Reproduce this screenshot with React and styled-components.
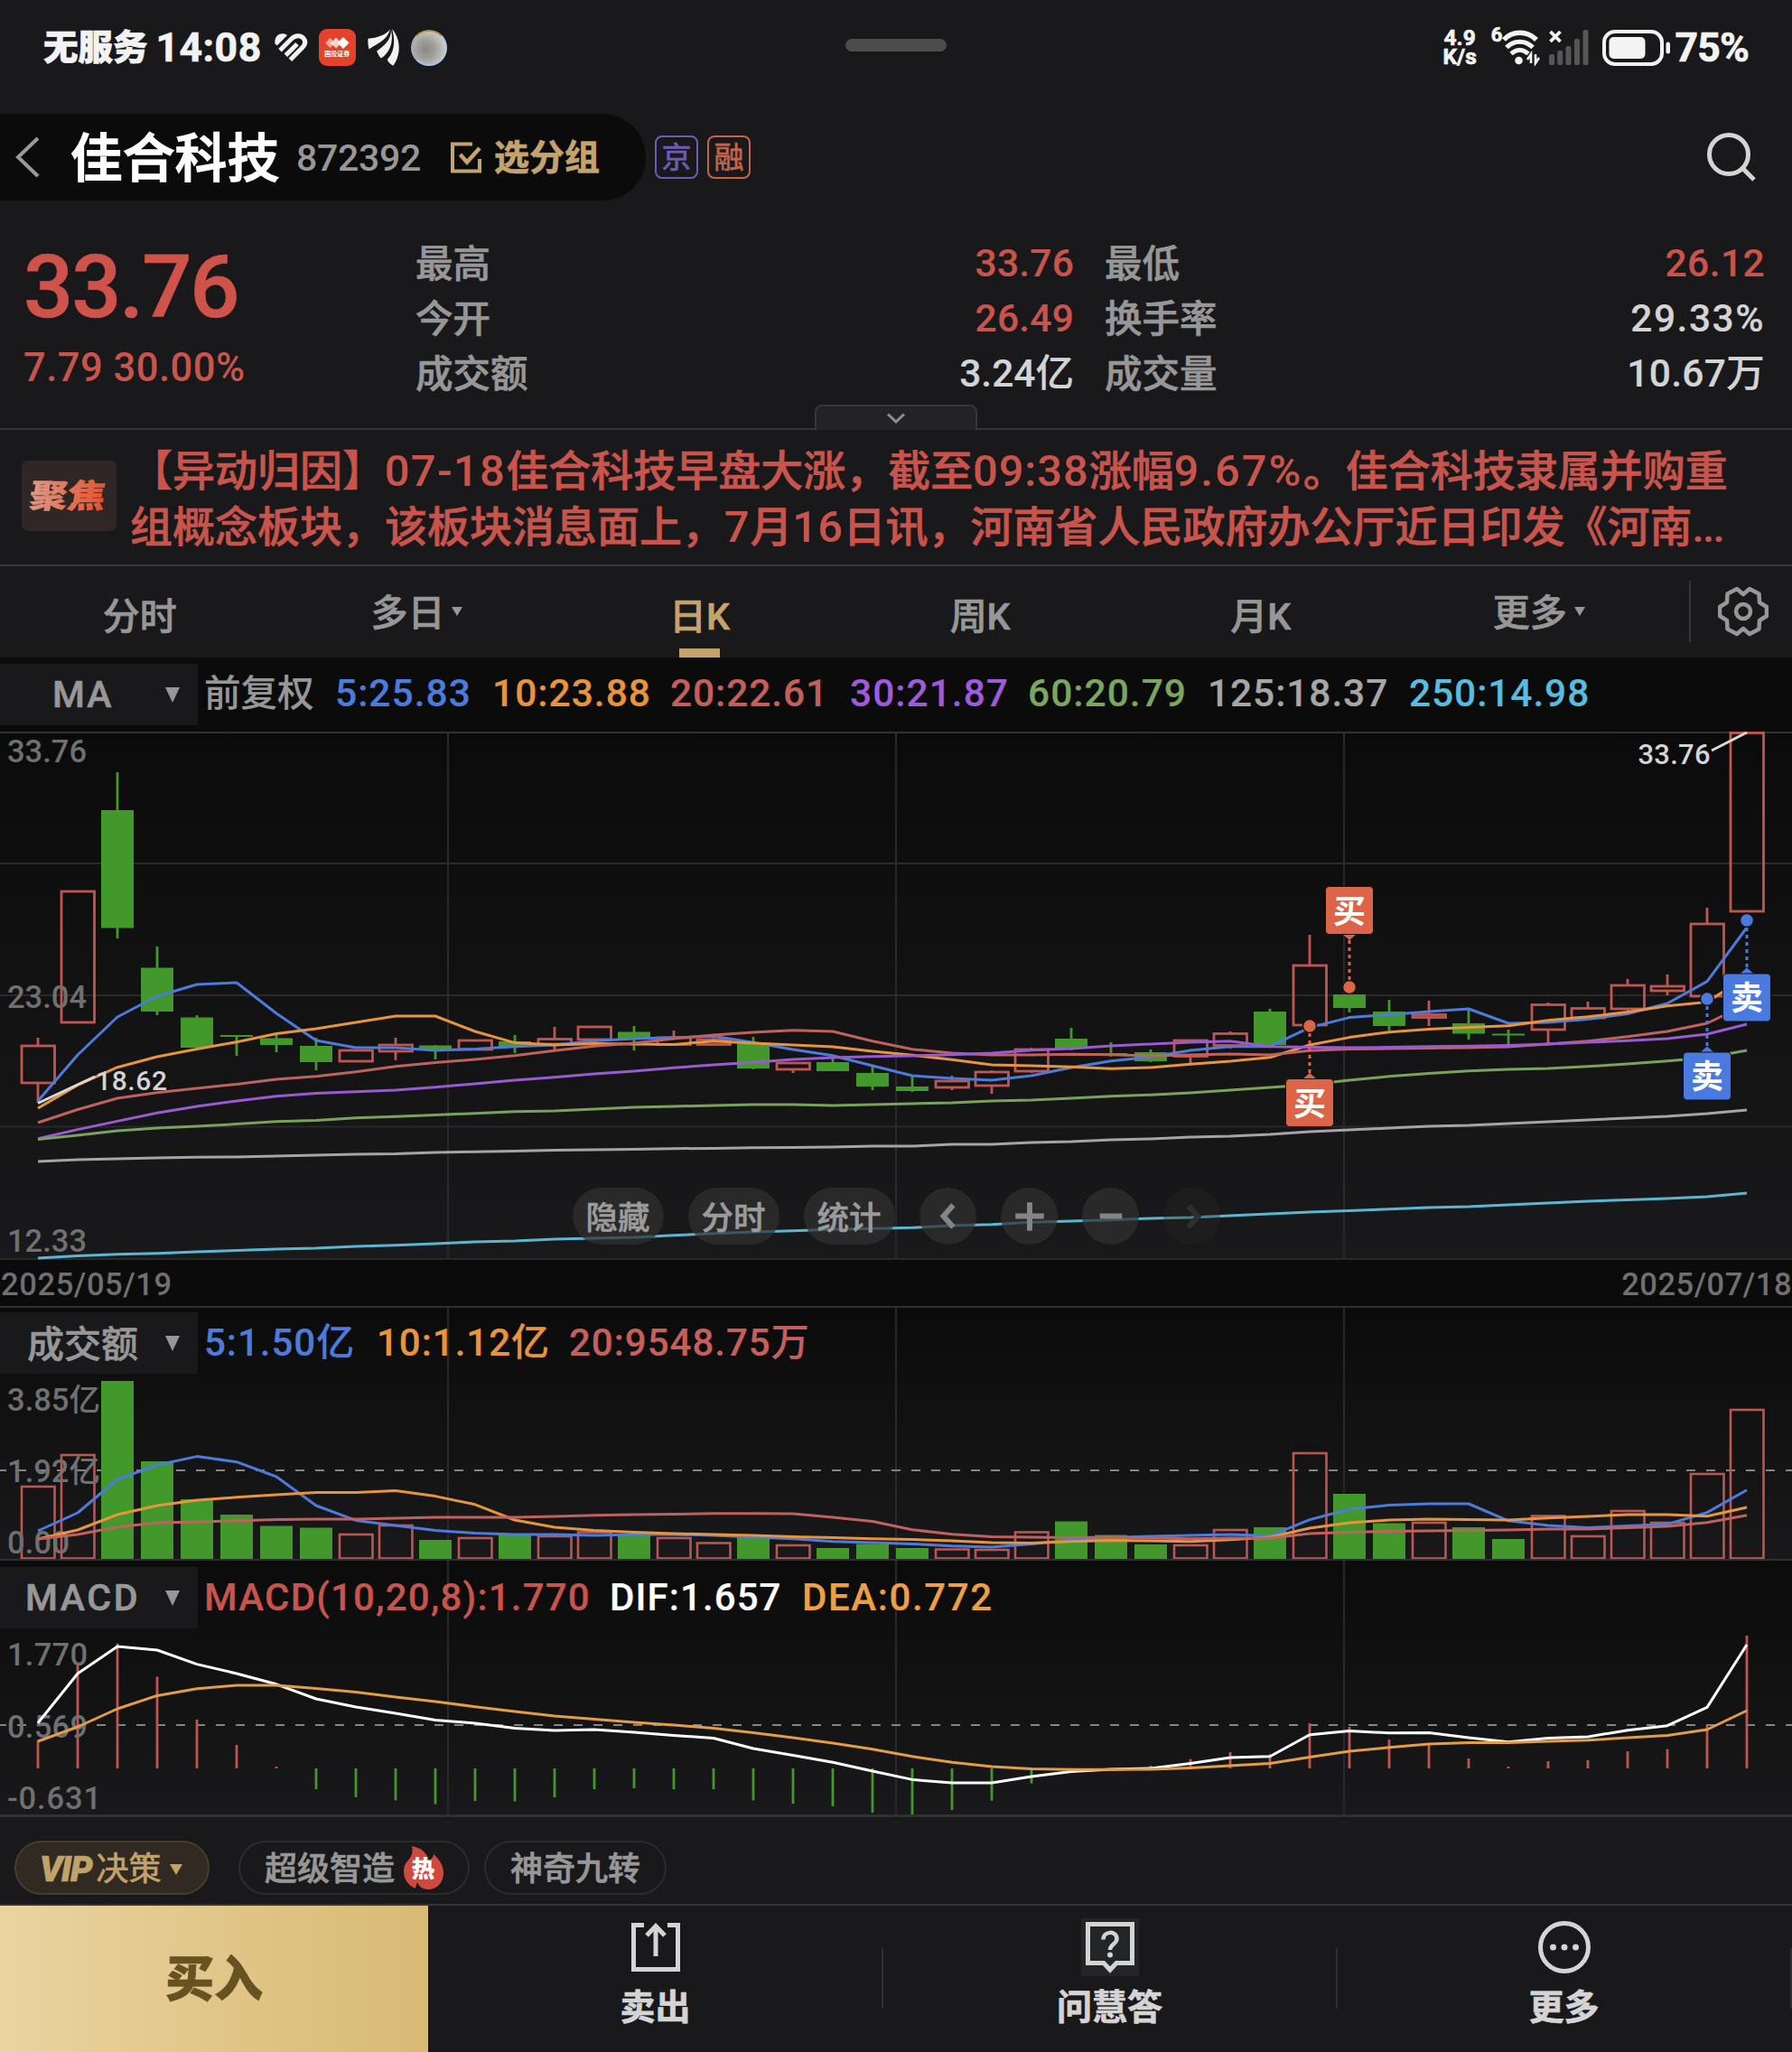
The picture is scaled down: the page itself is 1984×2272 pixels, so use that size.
import React from "react";
import styled, { createGlobalStyle } from "styled-components";

const RED = "#c8544c";
const GOLD = "#c4a46c";
const GRAY = "#979797";
const LIGHT = "#d4d4d4";
const DIM = "#707071";
const GREEN = "#43982b";
const BLUE = "#4d7bdb";
const ORANGE = "#e7943e";
const FONT = '"Roboto", "Noto Sans CJK SC", sans-serif';

const Global = createGlobalStyle`
  * { box-sizing: border-box; }
  body {
    margin: 0;
    background: #19191b;
    font-family: ${FONT};
    -webkit-text-stroke: 0.7px;
  }
  svg { display: block; }
`;

const Screen = styled.div`
  width: 1984px;
  height: 2272px;
  background: #19191b;
  display: flex;
  flex-direction: column;
  overflow: hidden;
  white-space: nowrap;
`;

const Text = styled.span`
  font-size: ${(p) => p.$size}px;
  font-weight: ${(p) => p.$weight || 500};
  color: ${(p) => p.$color || GRAY};
  letter-spacing: ${(p) => p.$ls || 0}px;
  line-height: 1;
`;

/* ---------- status bar ---------- */
const StatusBar = styled.header`
  height: 126px;
  padding: 0 48px 21px;
  display: grid;
  grid-template-columns: 1fr 112px 1fr;
  align-items: center;
`;
const StatusSide = styled.div`
  display: flex;
  align-items: center;
  justify-content: ${(p) => (p.$end ? "flex-end" : "flex-start")};
`;
const Handle = styled.div`
  height: 14px;
  margin-top: -5px;
  border-radius: 7px;
  background: #4c4c4c;
`;
const StatusText = styled(Text)`
  color: #f3f3f3;
  font-weight: ${(p) => p.$weight || 700};
  margin-left: ${(p) => p.$ml || 0}px;
  padding-top: 2px;
`;
const StatusIcon = styled.svg`
  margin-left: ${(p) => p.$ml}px;
  flex: none;
`;
const Speed = styled.div`
  display: flex;
  flex-direction: column;
  align-items: center;
  font-size: 24.5px;
  font-weight: 700;
  line-height: 20px;
  gap: 1px;
  color: #f3f3f3;
`;
const WifiBand = styled.span`
  align-self: flex-start;
  margin-left: 16px;
  margin-top: -3px;
  color: #f3f3f3;
  font-size: 22px;
  font-weight: 700;
  line-height: 26px;
`;
const BrokerLogo = styled.div`
  width: 41px;
  height: 41px;
  margin-left: 12px;
  border-radius: 9px;
  background: #e2432a;
  display: flex;
  flex-direction: column;
  align-items: center;
  justify-content: center;
  gap: 2px;
  color: #fff;
  font-size: 7px;
  font-weight: 700;
  line-height: 8px;
  -webkit-text-stroke: 0;
`;
const Ball = styled.div`
  width: 40px;
  height: 40px;
  margin-left: 12px;
  border-radius: 50%;
  border: 2.5px solid;
  border-color: #b08f55 #b9cbe0 #a3c6f2 #a9adb0;
  background: radial-gradient(circle at 40% 55%, #8b8983 0%, #a09f99 35%, #c3c2bd 68%, #e6e8e8 100%);
`;

/* ---------- title ---------- */
const TitleBar = styled.div`
  height: 96px;
  display: flex;
  align-items: center;
`;
const TitlePill = styled.div`
  width: 715px;
  height: 96px;
  padding-left: 17px;
  border-radius: 0 48px 48px 0;
  background: #0b0b0b;
  display: flex;
  align-items: center;
`;
const StockName = styled(Text)`
  width: 250px;
  margin-left: 34px;
  padding-top: 6px;
  -webkit-text-stroke: 1.5px;
`;
const StockCode = styled(Text)`
  width: 171px;
  padding-top: 2px;
  -webkit-text-stroke: 0;
`;
const GroupLabel = styled(Text)`
  margin-left: 14px;
  padding-top: 3px;
`;
const MarketBadge = styled.span`
  width: 48px;
  height: 48px;
  margin-left: 10px;
  border: 2px solid ${(p) => p.$color};
  border-radius: 8px;
  color: ${(p) => p.$color};
  font-size: 33px;
  line-height: 46px;
  text-align: center;
`;
const SearchIcon = styled.svg`
  margin-left: auto;
  margin-right: 38px;
`;

/* ---------- quote ---------- */
const Quote = styled.section`
  position: relative;
  height: 254px;
  padding: 40px 30px 0 26px;
  border-bottom: 2px solid #353537;
  display: grid;
  grid-template-columns: 434px 729px 1fr;
`;
const PriceBlock = styled.div`
  display: flex;
  flex-direction: column;
`;
const Price = styled(Text)`
  line-height: 113px;
`;
const Change = styled(Text)`
  line-height: 65px;
  -webkit-text-stroke: 0;
`;
const StatColumn = styled.div`
  display: flex;
  flex-direction: column;
  margin-left: ${(p) => p.$ml || 0}px;
`;
const StatRow = styled.div`
  height: 61px;
  display: flex;
  align-items: center;
  justify-content: space-between;
`;
const StatValue = styled(Text)`
  -webkit-text-stroke: 0.2px;
`;
const Expand = styled.div`
  position: absolute;
  left: 902px;
  bottom: -2px;
  width: 180px;
  height: 28px;
  border: 2px solid #38383a;
  border-bottom: 0;
  border-radius: 8px 8px 0 0;
  background: #232325;
  display: flex;
  align-items: center;
  justify-content: center;
`;

/* ---------- news ---------- */
const News = styled.section`
  height: 151px;
  padding: 15px 0 0 24px;
  border-bottom: 2px solid #353537;
  display: flex;
`;
const FocusBadge = styled.div`
  width: 105px;
  height: 78px;
  margin: 19px 15px 0 0;
  padding: 2px 2px 0 0;
  border-radius: 7px;
  background: #2f2726;
  display: flex;
  align-items: center;
  justify-content: center;
`;
const FocusText = styled.span`
  font-size: 42px;
  font-weight: 900;
  line-height: 1.2;
  transform: skewX(-8deg) scaleY(0.86);
  color: transparent;
  background: linear-gradient(90deg, #dd9a86, #e4512f);
  background-clip: text;
  -webkit-background-clip: text;
`;
const NewsBody = styled.div`
  color: ${RED};
  font-size: 47px;
  font-weight: 500;
  line-height: 62px;
`;
const NewsLine = styled.div`
  height: 62px;
`;
const Num = styled.span`
  font-size: 48.5px;
  letter-spacing: ${(p) => p.$ls}px;
  -webkit-text-stroke: 0.2px;
`;

/* ---------- period tabs ---------- */
const Tabs = styled.nav`
  height: 101px;
  display: flex;
  align-items: center;
`;
const Tab = styled.div`
  position: relative;
  width: 310.6px;
  height: 101px;
  padding-right: ${(p) => (p.$menu ? 9 : p.$first ? 1 : 4)}px;
  padding-bottom: ${(p) => (p.$menu ? 5 : 0)}px;
  padding-top: ${(p) => (p.$menu ? 0 : 3)}px;
  display: flex;
  align-items: center;
  justify-content: center;
  gap: 8px;
  color: ${(p) => (p.$active ? GOLD : GRAY)};
  font-size: 41px;
  font-weight: 500;
`;
const TabLine = styled.div`
  position: absolute;
  left: 131px;
  bottom: 0;
  width: 45px;
  height: 10px;
  background: ${GOLD};
`;
const Triangle = styled.i`
  width: 0;
  height: 0;
  margin-left: ${(p) => p.$ml || 0}px;
  margin-top: ${(p) => p.$mt || 0}px;
  border-left: ${(p) => p.$w / 2}px solid transparent;
  border-right: ${(p) => p.$w / 2}px solid transparent;
  border-top: ${(p) => p.$h}px solid ${(p) => p.$color || GRAY};
`;
const SettingsCell = styled.div`
  height: 68px;
  margin-left: 6px;
  margin-top: -2px;
  padding-left: 30px;
  border-left: 2px solid #353537;
  display: flex;
  align-items: center;
`;

/* ---------- indicator headers ---------- */
const Legend = styled.div`
  position: relative;
  height: ${(p) => p.$h}px;
  padding-top: 7px;
  background: ${(p) => p.$bg || "transparent"};
  display: flex;
  -webkit-text-stroke: 0.2px;
`;
const IndicatorPicker = styled.div`
  width: 219px;
  height: 68px;
  padding-right: 20px;
  background: #19191b;
  display: flex;
  align-items: center;
  justify-content: flex-end;
`;
const PickerName = styled(Text)`
  flex: 1;
  padding-left: ${(p) => p.$pl}px;
  padding-top: ${(p) => p.$pt || 0}px;
  -webkit-text-stroke: 0.6px;
`;
const LegendItems = styled.div`
  height: 67px;
  display: grid;
  grid-template-columns: ${(p) => p.$cols};
  align-items: center;
  padding-left: 7px;
`;

/* ---------- panels ---------- */
const Panel = styled.section`
  position: relative;
  height: ${(p) => p.$h}px;
  background: linear-gradient(#0b0b0b, #19191b);
`;
const Plot = styled.svg`
  position: absolute;
  left: 0;
  top: 0;
`;
const DateBar = styled.div`
  height: 51px;
  padding: 3px 0 0 1px;
  background: #0b0b0b;
  display: flex;
  align-items: center;
  justify-content: space-between;
  -webkit-text-stroke: 0;
`;
const PlotButtons = styled.div`
  position: absolute;
  left: 634px;
  top: 505px;
  display: flex;
  gap: 27px;
`;
const PlotButton = styled.button`
  width: ${(p) => (p.$round ? 63 : 101)}px;
  height: 63px;
  padding: 0 1px 2px 0;
  border: 0;
  border-radius: 32px;
  background: ${(p) => (p.$off ? "rgba(40,40,41,0.35)" : "rgba(48,48,49,0.72)")};
  color: #9b9b9b;
  font-family: ${FONT};
  font-size: 35.5px;
  font-weight: 500;
  -webkit-text-stroke: 0.6px;
  display: flex;
  align-items: center;
  justify-content: center;
`;

/* ---------- strategy strip ---------- */
const Strip = styled.div`
  height: 99px;
  padding: 27px 0 0 16px;
  border-bottom: 2px solid #353537;
  display: flex;
`;
const Chip = styled.div`
  width: ${(p) => p.$w}px;
  height: 60px;
  margin-right: ${(p) => p.$mr || 0}px;
  padding-left: ${(p) => (p.$gold ? 26 : 27)}px;
  border: 2px solid ${(p) => (p.$gold ? "#463c2b" : "#2c2c2e")};
  border-radius: 30px;
  background: ${(p) => (p.$gold ? "#302a23" : "transparent")};
  color: ${(p) => (p.$gold ? "#c0a26b" : GRAY)};
  font-size: 36px;
  font-weight: ${(p) => (p.$gold ? 400 : 500)};
  line-height: 1;
  display: flex;
  align-items: center;
`;
const ChipLabel = styled.span`
  padding-top: 4px;
`;
const Vip = styled.span`
  margin-right: 5px;
  padding-top: 4px;
  font-size: 39px;
  font-style: italic;
  font-weight: 900;
  letter-spacing: -1.2px;
`;
const HotBadge = styled.div`
  position: relative;
  width: 44px;
  height: 48px;
  margin-left: 10px;
`;
const HotText = styled.span`
  position: absolute;
  left: 9px;
  top: 13px;
  color: #fff;
  font-size: 25px;
  font-weight: 700;
  line-height: 26px;
`;

/* ---------- bottom bar ---------- */
const BottomBar = styled.footer`
  height: 162px;
  display: flex;
`;
const BuyButton = styled.div`
  width: 474px;
  height: 162px;
  padding-bottom: 7px;
  background: linear-gradient(90deg, #e9d4a0, #dfc283 65%, #d9b974);
  color: #675222;
  font-size: 54px;
  font-weight: 900;
  display: flex;
  align-items: center;
  justify-content: center;
`;
const Action = styled.div`
  position: relative;
  width: 503px;
  padding-top: 14px;
  display: flex;
  flex-direction: column;
  align-items: center;
  gap: 14px;
  color: ${LIGHT};
  font-size: 39px;
  font-weight: 700;
  line-height: 42px;
`;
const Divider = styled.i`
  position: absolute;
  right: -1px;
  top: 47px;
  width: 2px;
  height: 67px;
  background: #2f2f31;
`;

/* ---------- data ---------- */
const X = (i) => 42 + 44 * i;

// [rising, high, top, bottom, low]
const candles = [
  [1, 1149, 1158, 1199, 1221], [1, 987, 987, 1132, 1133], [0, 855, 897, 1027.5, 1039], [0, 1048, 1071.5, 1120, 1124],
  [0, 1124, 1126.5, 1160, 1160], [0, 1146, 1146, 1148, 1169], [0, 1144, 1149.5, 1157, 1165], [0, 1149, 1158, 1176, 1185],
  [1, 1163, 1163, 1175, 1175], [1, 1149, 1157, 1164, 1174], [0, 1157, 1157.5, 1163, 1173], [1, 1152, 1152, 1162, 1162],
  [0, 1146, 1153, 1159, 1166], [1, 1137, 1150.5, 1156, 1163], [1, 1136, 1137, 1151, 1156], [0, 1136, 1142.5, 1150, 1163],
  [1, 1141, 1149, 1156.5, 1157], [1, 1147, 1151, 1156.5, 1157], [0, 1148, 1154.5, 1183, 1184], [1, 1177, 1177, 1184, 1188],
  [0, 1170, 1176, 1186, 1186], [0, 1180, 1188, 1203, 1207], [0, 1192, 1203, 1208, 1209], [1, 1191, 1197, 1204, 1207],
  [1, 1185, 1187, 1202, 1211], [1, 1160, 1162, 1186, 1188], [0, 1138, 1150, 1161, 1163], [0, 1154, 1166, 1168, 1170],
  [0, 1162, 1165, 1175, 1176], [1, 1151, 1152, 1169.5, 1177], [1, 1142, 1144.5, 1157.5, 1161], [0, 1117, 1120, 1157, 1157],
  [1, 1035, 1069, 1135, 1136], [0, 1093, 1101, 1116, 1121], [0, 1107, 1120, 1136, 1141], [1, 1108, 1123.5, 1126.5, 1136],
  [0, 1118, 1133, 1144.5, 1151], [0, 1140, 1144.5, 1146.5, 1156], [1, 1110, 1112.5, 1140, 1155], [1, 1109, 1116.5, 1127, 1127],
  [1, 1084, 1091, 1117, 1120], [1, 1079, 1092, 1097, 1102], [1, 1005, 1023, 1103, 1106], [1, 811, 811.5, 1009, 1009],
];

const averages = [
  ["#a5a5a5", [1286, 1284, 1283, 1282, 1281.3, 1281, 1280, 1279, 1278, 1277.5, 1276, 1275.3, 1274.4, 1273.5, 1273, 1272.6, 1271.7, 1271.5, 1270.8, 1270.6, 1270, 1269, 1269, 1267, 1267, 1265, 1264, 1262, 1261, 1259, 1258, 1256, 1253, 1251, 1249, 1247, 1246, 1244, 1242, 1240, 1238, 1236, 1233, 1229]],
  ["#5bb6d2", [1393, 1390.6, 1388.8, 1387.8, 1386, 1384.6, 1383, 1382, 1380, 1378.7, 1377, 1375, 1374, 1372, 1371, 1370, 1367.7, 1365.7, 1364, 1362.7, 1361.3, 1360.3, 1359.3, 1357, 1355.7, 1353.3, 1352, 1350.7, 1349, 1348, 1346, 1344, 1342, 1340.5, 1338.7, 1337, 1336, 1334, 1332, 1330, 1328.6, 1327, 1325, 1321]],
  [BLUE, [1219, 1168, 1126, 1103, 1090, 1088, 1122, 1152, 1160, 1160, 1163, 1161.5, 1158.7, 1157, 1152.5, 1150, 1148.7, 1147.3, 1154.3, 1162, 1168.7, 1180, 1191, 1194, 1196, 1191, 1182, 1174.7, 1170.3, 1163, 1158.7, 1158.7, 1137.6, 1126.6, 1123.4, 1120, 1117, 1133, 1132, 1128.4, 1122.5, 1111, 1086.6, 1027]],
  [ORANGE, [1227, 1201.4, 1181.7, 1170, 1161.5, 1153.7, 1144.5, 1139, 1132, 1125, 1125, 1142, 1154.6, 1157, 1155.5, 1156, 1156.5, 1152.7, 1155, 1157, 1159, 1164, 1168.3, 1173.3, 1179, 1180, 1181.3, 1183.3, 1182, 1178.3, 1175, 1170.7, 1157, 1148.6, 1142.7, 1139.4, 1137.6, 1135.8, 1129.8, 1125.7, 1120.6, 1113.7, 1109.6, 1081]],
  ["#bf625e", [1243, 1228.5, 1216, 1209.7, 1205, 1200.5, 1195, 1191.8, 1186.7, 1180.8, 1176.6, 1173, 1168.8, 1163.3, 1158.3, 1155, 1150, 1146, 1143, 1140.7, 1142, 1152.7, 1161.7, 1166, 1168, 1168, 1167.3, 1167.7, 1169, 1168, 1167, 1168, 1163.3, 1161.5, 1161, 1160.5, 1160, 1159, 1156, 1152.8, 1147.7, 1142, 1133, 1112]],
  ["#995ad2", [1260.7, 1250.6, 1241.4, 1232.2, 1225, 1219, 1213.8, 1210.6, 1208.8, 1207, 1203.7, 1200, 1196, 1192.7, 1189, 1186, 1182.3, 1179, 1176.3, 1173, 1171, 1169.7, 1169, 1167.7, 1166, 1162.7, 1161, 1158, 1156, 1154, 1152.8, 1158.7, 1159.6, 1160, 1159.6, 1158.8, 1158.3, 1157.4, 1156, 1154, 1152.3, 1150, 1145, 1134]],
  ["#7aa25c", [1261.6, 1257, 1252, 1249, 1247, 1244.6, 1241.8, 1240.5, 1237.7, 1236.3, 1234.5, 1232.7, 1230.8, 1230, 1228, 1226, 1225, 1224, 1223, 1223, 1224, 1223, 1222, 1221, 1219, 1218, 1216, 1213.7, 1212.3, 1210, 1207, 1204, 1201, 1196, 1191.8, 1188.6, 1185.8, 1184, 1183, 1180.8, 1178, 1174.8, 1171, 1163]],
];

const volumeTops = [1646, 1611, 1529, 1618, 1660, 1677, 1689.5, 1691.5, 1699, 1689, 1705, 1703, 1699.5, 1701, 1696.5, 1699, 1703, 1708.5, 1702, 1711, 1714, 1709.5, 1714, 1715.5, 1716, 1696.5, 1684.5, 1699.5, 1710, 1711, 1694, 1691, 1609, 1654, 1686.5, 1686, 1691, 1704, 1678.5, 1701, 1673, 1686, 1632, 1561];

const volumeAverages = [
  [BLUE, [1695, 1675, 1638, 1622, 1612.6, 1618.7, 1635, 1667, 1683.4, 1689, 1694.5, 1697.6, 1699, 1699, 1700, 1699, 1699, 1700, 1702, 1703.7, 1706.7, 1708, 1709.4, 1711.7, 1713, 1709.4, 1705, 1702.5, 1701, 1700, 1699, 1700.6, 1682.6, 1671, 1666.6, 1665, 1665, 1683.8, 1689, 1691.4, 1689.5, 1687.6, 1674.6, 1649.7]],
  [ORANGE, [1704, 1694, 1677, 1667, 1661, 1657.8, 1655, 1652.4, 1652.4, 1650.5, 1656.6, 1665.8, 1683, 1691, 1694.5, 1696.4, 1698, 1699, 1700, 1701.4, 1702.5, 1703.7, 1704.5, 1706, 1708, 1708.6, 1706.7, 1705.6, 1706, 1706.7, 1704.8, 1702, 1692, 1686, 1683, 1682, 1682.5, 1683, 1680.7, 1679, 1677, 1677, 1678.8, 1669]],
  ["#bf625e", [1704, 1699, 1690.7, 1686, 1685, 1683.8, 1682.6, 1682, 1682, 1681, 1680, 1680, 1680, 1679, 1677.7, 1677, 1676.5, 1675.7, 1675.7, 1676, 1680, 1684.5, 1693.7, 1698.7, 1701.4, 1702, 1702.5, 1702, 1703, 1703.7, 1703, 1703, 1698, 1696.4, 1695.6, 1695, 1694.5, 1694, 1693, 1693, 1691.4, 1690, 1685.7, 1677.7]],
];

const macdEnds = [1927, 1842, 1819.6, 1856.4, 1903.8, 1932, 1956, 1981, 1990, 1993.4, 1997.6, 1994, 1994.5, 1990, 1981, 1980, 1981, 1981, 1993.4, 1997, 2000, 2007, 2010, 2004, 1993.8, 1974.6, 1957.8, 1957.8, 1955, 1947.8, 1940, 1942.5, 1908, 1912, 1926, 1931.8, 1947, 1956, 1950, 1949, 1939, 1936.7, 1910, 1811];
const dif = [1907.7, 1853, 1823, 1827, 1842.6, 1853, 1864.8, 1881, 1890, 1897, 1904.6, 1908, 1913.4, 1916, 1915, 1918, 1921.4, 1924.5, 1936, 1943.6, 1951.3, 1961, 1970.4, 1974, 1974, 1967, 1961.6, 1959, 1958, 1952.4, 1946, 1944.8, 1920.7, 1916.5, 1918.8, 1918.4, 1924, 1928.7, 1924.5, 1923, 1915.7, 1910.7, 1890.4, 1821];
const dea = [1928, 1912, 1892, 1877.4, 1869.8, 1866, 1866, 1869.4, 1873.6, 1879, 1884, 1889.7, 1895, 1900, 1903.5, 1907, 1910, 1913.4, 1918.4, 1924, 1930, 1936.7, 1944.8, 1951.3, 1956, 1958.6, 1959.3, 1959.3, 1959, 1957.4, 1955, 1952.4, 1945.5, 1939, 1934.8, 1931, 1929.5, 1929.5, 1928, 1926.8, 1924, 1921.4, 1915, 1894];

/* ---------- chart parts ---------- */
const Line = ({ ys, color }) => (
  <polyline
    points={ys.map((y, i) => `${X(i)},${y}`).join(" ")}
    fill="none"
    stroke={color}
    strokeWidth="3"
    strokeLinejoin="round"
  />
);

const Axis = ({ x = 8, y, w, color = DIM, size = 34.5, children }) => (
  <text
    x={x}
    y={y}
    textLength={w}
    lengthAdjust="spacing"
    fill={color}
    fontFamily='Roboto, "Noto Sans CJK SC", sans-serif'
    fontSize={size}
    fontWeight="500"
  >
    {children}
  </text>
);

const Verticals = ({ y1, y2 }) => (
  <g stroke="#29292b" strokeWidth="2">
    {[496, 992, 1488].map((x) => (
      <line key={x} x1={x} x2={x} y1={y1} y2={y2} />
    ))}
  </g>
);

const Candle = ({ i, data: [up, high, top, bottom, low] }) => {
  const x = X(i);
  if (up) {
    return (
      <g stroke="#c0564f" strokeWidth="2.8" fill="none">
        <line x1={x} x2={x} y1={high} y2={top} />
        <line x1={x} x2={x} y1={bottom} y2={low} />
        <rect x={x - 18} y={top} width="36.5" height={bottom - top} />
      </g>
    );
  }
  return (
    <g fill={GREEN}>
      <rect x={x - 1.4} y={high} width="2.8" height={low - high} />
      <rect x={x - 18} y={top} width="36" height={bottom - top} />
    </g>
  );
};

const Marker = ({ x, dotY, boxY, color, label }) => {
  const below = boxY > dotY;
  const edge = below ? boxY : boxY + 52;
  const tip = below ? edge - 7 : edge + 7;
  return (
    <g>
      <line x1={x} x2={x} y1={dotY} y2={tip} stroke={color} strokeWidth="3" strokeDasharray="4 4" />
      <circle cx={x} cy={dotY} r="7.5" fill={color} stroke="#141415" strokeWidth="1.5" />
      <path d={`M${x - 8} ${edge}L${x} ${tip}L${x + 8} ${edge}Z`} fill={color} />
      <rect x={x - 26.5} y={boxY - 0.5} width="53" height="53" rx="4" fill={color} stroke="#111112" strokeWidth="1" />
      <text
        x={x}
        y={boxY + 39.5}
        textAnchor="middle"
        fill="#fff"
        fontFamily='"Noto Sans CJK SC", sans-serif'
        fontSize="36"
        fontWeight="700"
      >
        {label}
      </text>
    </g>
  );
};

const PricePlot = () => (
  <Plot width="1984" height="585" viewBox="0 810 1984 585">
    <g stroke="#29292b" strokeWidth="2">
      {[956, 1102, 1247.5, 1394].map((y) => (
        <line key={y} x1="0" x2="1984" y1={y} y2={y} />
      ))}
    </g>
    <line x1="0" x2="1984" y1="811" y2="811" stroke="#303032" strokeWidth="2" />
    <Verticals y1={811} y2={1394} />
    {candles.map((c, i) => (
      <Candle key={i} i={i} data={c} />
    ))}
    <Axis y={844} w={88}>33.76</Axis>
    <Axis y={1115.5} w={88}>23.04</Axis>
    <Axis y={1386} w={88}>12.33</Axis>
    {averages.map(([color, ys]) => (
      <Line key={color} ys={ys} color={color} />
    ))}
    <g stroke="#d8d8d8" strokeWidth="3">
      <line x1="42" y1="1221.5" x2="105" y2="1192" />
      <line x1="1895" y1="831" x2="1934" y2="811" />
    </g>
    <Axis x={106} y={1207} w={79} size={30} color={LIGHT}>18.62</Axis>
    <Axis x={1813.5} y={846} w={80} size={31} color={LIGHT}>33.76</Axis>
    <Marker x={1450} dotY={1136} boxY={1195} color="#db6546" label="买" />
    <Marker x={1494} dotY={1093} boxY={982} color="#db6546" label="买" />
    <Marker x={1890} dotY={1106} boxY={1165.5} color="#4a79e0" label="卖" />
    <Marker x={1934} dotY={1019} boxY={1078.5} color="#4a79e0" label="卖" />
  </Plot>
);

const VolumePlot = () => (
  <Plot width="1984" height="282" viewBox="0 1446 1984 282">
    <line x1="0" x2="1984" y1="1447" y2="1447" stroke="#303032" strokeWidth="2" />
    <Verticals y1={1447} y2={1728} />
    <line x1="0" x2="1984" y1="1628" y2="1628" stroke="#858585" strokeWidth="2" strokeDasharray="10 12" strokeDashoffset="3" />
    {volumeTops.map((y, i) =>
      candles[i][0] ? (
        <rect key={i} x={X(i) - 18} y={y} width="36.5" height={1725.5 - y} fill="none" stroke="#bc5650" strokeWidth="2.6" />
      ) : (
        <rect key={i} x={X(i) - 18} y={y} width="36" height={1726.5 - y} fill={GREEN} />
      )
    )}
    <Axis y={1562} w={103}>3.85亿</Axis>
    <Axis y={1641} w={103}>1.92亿</Axis>
    <Axis y={1720} w={69}>0.00</Axis>
    {volumeAverages.map(([color, ys]) => (
      <Line key={color} ys={ys} color={color} />
    ))}
    <line x1="0" x2="1984" y1="1727" y2="1727" stroke="#303032" strokeWidth="2" />
  </Plot>
);

const MacdPlot = () => (
  <Plot width="1984" height="284" viewBox="0 1728 1984 284">
    <Verticals y1={1728} y2={2010} />
    <line x1="0" x2="1984" y1="1910" y2="1910" stroke="#858585" strokeWidth="2" strokeDasharray="10 12" strokeDashoffset="3" />
    {macdEnds.map((y, i) => (
      <line key={i} x1={X(i)} x2={X(i)} y1="1958" y2={y} stroke={y > 1958 ? GREEN : "#c0564f"} strokeWidth="2.8" />
    ))}
    <Axis y={1844} w={89}>1.770</Axis>
    <Axis y={1924} w={89}>0.569</Axis>
    <Axis y={2002.5} w={104}>-0.631</Axis>
    <Line ys={dif} color="#fff" />
    <Line ys={dea} color="#e39d46" />
    <line x1="0" x2="1984" y1="2010.5" y2="2010.5" stroke="#303032" strokeWidth="3" />
  </Plot>
);

const Picker = ({ name, pl, pt, size = 41, ls = 0 }) => (
  <IndicatorPicker>
    <PickerName $size={size} $pl={pl} $pt={pt} $ls={ls}>{name}</PickerName>
    <Triangle $w={17} $h={17} />
  </IndicatorPicker>
);

const stats = [
  [["最高", "33.76", 1, 0.2], ["今开", "26.49", 1, 0.2], ["成交额", "3.24亿", 0, 0]],
  [["最低", "26.12", 1, 0.4], ["换手率", "29.33%", 0, 1.5], ["成交量", "10.67万", 0, 0.3]],
];

export default function App() {
  return (
    <Screen>
      <Global />
      <StatusBar>
        <StatusSide>
          <StatusText $size={38.5} $weight={900}>无服务</StatusText>
          <StatusText $size={44.5} $ml={9} $ls={0.5}>14:08</StatusText>
          <StatusIcon $ml={14} width="37" height="32" viewBox="0 0 111 96">
            <path d="M1 31C0 10 14 1 26 1C33 1 38 3 42 6L9 40C4 38 1 35 1 31Z" fill="#f3f3f3" />
            <g fill="none" stroke="#f3f3f3" strokeWidth="15">
              <path d="M18 56L56 18C70 4 87 6 96 16C105 27 101 38 92 47L52 88" />
              <path d="M37 73L75 35" />
            </g>
          </StatusIcon>
          <BrokerLogo>
            <svg width="28" height="13" viewBox="0 0 28 13" fill="#fff">
              <path d="M21 0L27.500 6.500L21 13L14.500 6.500Z" />
              <path d="M13 0.500L19 6.500L13 12.500L7 6.500Z" opacity="0.75" />
              <path d="M6.500 1L12 6.500L6.500 12L1 6.500Z" opacity="0.55" />
            </svg>
            国投证券
          </BrokerLogo>
          <StatusIcon $ml={13} width="36" height="41" viewBox="0 0 106 122" fill="#f3f3f3">
            <path d="M1 32C32 30 60 20 74 1C64 36 38 45 4 67C1 56 0 44 1 32Z" />
            <path d="M77 3C76 40 54 54 30 73C33 82 37 90 44 97C70 80 86 48 77 3Z" />
            <path d="M80 1C102 24 116 74 84 121C75 117 68 110 64 101C90 74 90 34 80 1Z" />
          </StatusIcon>
          <Ball />
        </StatusSide>
        <Handle />
        <StatusSide $end>
          <Speed>
            <span>4.9</span>
            <span>K/s</span>
          </Speed>
          <WifiBand>6</WifiBand>
          <StatusIcon $ml={-1} width="43" height="41" viewBox="11 0 43 41" fill="none" stroke="#f3f3f3" strokeWidth="5.500">
            <path d="M14 12C23 1.500 40 1.500 50 12" />
            <path d="M17 20.500C25 12 38 12 46 20.500" strokeWidth="5" />
            <path d="M22 27.500C28 22 35 22 41 27.500" strokeWidth="5" />
            <circle cx="30.500" cy="35" r="4.300" fill="#f3f3f3" stroke="none" />
            <path d="M44 38V28L40 34M49 28V38L53 32" strokeWidth="2.600" />
          </StatusIcon>
          <StatusIcon $ml={10} width="44" height="40" viewBox="0 0 44 40">
            <g fill="#565657">
              <rect x="0" y="27" width="6" height="12" rx="2" />
              <rect x="9.200" y="23" width="6" height="16" rx="2" />
              <rect x="18.500" y="18" width="6" height="21" rx="2" />
              <rect x="28" y="10" width="6" height="29" rx="2" />
              <rect x="37.500" y="0" width="6" height="39" rx="2" />
            </g>
            <path d="M1.500 2L12.500 13M12.500 2L1.500 13" stroke="#f3f3f3" strokeWidth="3.800" />
          </StatusIcon>
          <StatusIcon $ml={15} width="76" height="40" viewBox="0 0 76 40">
            <rect x="2" y="2" width="64" height="36" rx="12" fill="none" stroke="#f3f3f3" strokeWidth="4" />
            <rect x="7.500" y="8" width="40" height="24" rx="5" fill="#f3f3f3" />
            <rect x="70.500" y="13.500" width="4.500" height="13" rx="2.200" fill="#f3f3f3" />
          </StatusIcon>
          <StatusText $size={44.5} $ml={4} $ls={-0.8}>75%</StatusText>
        </StatusSide>
      </StatusBar>

      <TitleBar>
        <TitlePill>
          <svg width="27" height="46" viewBox="0 0 27 46" fill="none" stroke="#9a9a9a" strokeWidth="4">
            <path d="M25 2L3 23L25 44" />
          </svg>
          <StockName $size={57.5} $weight={500} $color="#fff" $ls={0.4}>佳合科技</StockName>
          <StockCode $size={41} $weight={500} $ls={-0.3}>872392</StockCode>
          <svg width="34" height="35" viewBox="0 0 34 35" fill="none" stroke={GOLD} strokeWidth="4">
            <path d="M24 2.500H2V32.500H32V19" />
            <path d="M10.500 14L18 22.500L32 7" strokeWidth="4.500" />
          </svg>
          <GroupLabel $size={39} $weight={700} $color={GOLD}>选分组</GroupLabel>
        </TitlePill>
        <MarketBadge $color="#6d5cb4">京</MarketBadge>
        <MarketBadge $color="#c4634c">融</MarketBadge>
        <SearchIcon width="56" height="56" viewBox="0 0 56 56" fill="none" stroke={LIGHT} strokeWidth="5">
          <circle cx="24" cy="25" r="21.500" />
          <path d="M40 41L52 53" />
        </SearchIcon>
      </TitleBar>

      <Quote>
        <PriceBlock>
          <Price $size={97} $color="#cf524b" $ls={-2}>33.76</Price>
          <Change $size={43.5} $color={RED} $ls={0.5}>7.79 30.00%</Change>
        </PriceBlock>
        {stats.map((rows, c) => (
          <StatColumn key={c} $ml={c ? 34 : 0}>
            {rows.map(([label, value, up, ls]) => (
              <StatRow key={label}>
                <Text $size={41.5}>{label}</Text>
                <StatValue $size={42.5} $color={up ? RED : LIGHT} $ls={ls}>{value}</StatValue>
              </StatRow>
            ))}
          </StatColumn>
        ))}
        <Expand>
          <svg width="22" height="12" viewBox="0 0 22 12" fill="none" stroke="#8f8f8f" strokeWidth="3">
            <path d="M2 1.500L11 10L20 1.500" />
          </svg>
        </Expand>
      </Quote>

      <News>
        <FocusBadge>
          <FocusText>聚焦</FocusText>
        </FocusBadge>
        <NewsBody>
          <NewsLine>
            【异动归因】<Num $ls={1.5}>07-18</Num>佳合科技早盘大涨，截至<Num $ls={1.1}>09:38</Num>涨幅<Num $ls={2.2}>9.67%</Num>。佳合科技隶属并购重
          </NewsLine>
          <NewsLine>
            组概念板块，该板块消息面上，<Num $ls={1}>7</Num>月<Num $ls={0.4}>16</Num>日讯，河南省人民政府办公厅近日印发《河南<Num $ls={-2}>...</Num>
          </NewsLine>
        </NewsBody>
      </News>

      <Tabs>
        <Tab $first>分时</Tab>
        <Tab $menu>多日<Triangle $w={13} $h={10} $mt={3} /></Tab>
        <Tab $active>日K<TabLine /></Tab>
        <Tab>周K</Tab>
        <Tab>月K</Tab>
        <Tab $menu>更多<Triangle $w={13} $h={10} $mt={3} /></Tab>
        <SettingsCell>
          <svg width="56" height="56" viewBox="0 0 56 56" fill="none" stroke={GRAY} strokeWidth="4.500" strokeLinejoin="round">
            <path d="M21 3L28 9L35 3L45.500 8.500L46 18L54 23V33L46 38L45.500 47.500L35 53L28 47L21 53L10.500 47.500L10 38L2 33V23L10 18L10.500 8.500Z" />
            <circle cx="28" cy="28" r="8" />
          </svg>
        </SettingsCell>
      </Tabs>

      <Legend $h={82} $bg="#0b0b0b">
        <Picker name="MA" pl={58} pt={1} ls={2} />
        <LegendItems $cols="145px 174px 197px 199px 197px 199px 223px 200px">
          <Text $size={40.5}>前复权</Text>
          <Text $size={42.5} $color={BLUE} $ls={1}>5:25.83</Text>
          <Text $size={42.5} $color={ORANGE} $ls={1}>10:23.88</Text>
          <Text $size={42.5} $color="#c4605c" $ls={0.9}>20:22.61</Text>
          <Text $size={42.5} $color="#9e5bdb" $ls={1}>30:21.87</Text>
          <Text $size={42.5} $color="#7ba65f" $ls={1}>60:20.79</Text>
          <Text $size={42.5} $color="#a6a6a6" $ls={0.9}>125:18.37</Text>
          <Text $size={42.5} $color="#5bbbdc" $ls={0.9}>250:14.98</Text>
        </LegendItems>
      </Legend>
      <Panel $h={585}>
        <PricePlot />
        <PlotButtons>
          <PlotButton>隐藏</PlotButton>
          <PlotButton>分时</PlotButton>
          <PlotButton>统计</PlotButton>
          {[
            ["M38 20L27 32.500L38 45", 0],
            ["M32.500 17V49M16.500 32.500H48.500", 0],
            ["M20 32.500H45", 0],
            ["M28 21L39 33L28 45", 1],
          ].map(([d, off]) => (
            <PlotButton key={d} $round $off={off}>
              <svg width="63" height="63" viewBox="0 0 63 63" fill="none" stroke={off ? "#2f2f30" : "#858585"} strokeWidth="6">
                <path d={d} />
              </svg>
            </PlotButton>
          ))}
        </PlotButtons>
      </Panel>
      <DateBar>
        <Text $size={34.5} $color={DIM} $ls={0.6}>2025/05/19</Text>
        <Text $size={34.5} $color={DIM} $ls={0.5}>2025/07/18</Text>
      </DateBar>

      <Panel $h={282}>
        <VolumePlot />
        <Legend $h={82}>
          <Picker name="成交额" pl={30} pt={4} size={41} />
          <LegendItems $cols="191px 213px 300px">
            <Text $size={42} $color={BLUE} $ls={1}>5:1.50亿</Text>
            <Text $size={42} $color={ORANGE} $ls={1}>10:1.12亿</Text>
            <Text $size={42} $color="#c4605c" $ls={1}>20:9548.75万</Text>
          </LegendItems>
        </Legend>
      </Panel>
      <Panel $h={283}>
        <MacdPlot />
        <Legend $h={82}>
          <Picker name="MACD" pl={28} pt={1} ls={2.6} />
          <LegendItems $cols="449px 213px 300px">
            <Text $size={42} $color={RED} $ls={1.2}>MACD(10,20,8):1.770</Text>
            <Text $size={42} $color="#fff" $ls={1.1}>DIF:1.657</Text>
            <Text $size={42} $color="#eca043" $ls={1.6}>DEA:0.772</Text>
          </LegendItems>
        </Legend>
      </Panel>

      <Strip>
        <Chip $w={216} $mr={32} $gold>
          <Vip>VIP</Vip>
          <ChipLabel>决策</ChipLabel>
          <Triangle $w={14} $h={12} $ml={9} $mt={3} $color="#c0a26b" />
        </Chip>
        <Chip $w={256} $mr={16}>
          <ChipLabel>超级智造</ChipLabel>
          <HotBadge>
            <svg width="44" height="48" viewBox="0 0 44 48" fill="#d0493f">
              <path d="M9 0C20 2 26 8 28 16C31 14 33 12 33 9C40 15 44 22 44 30C44 41 36 48 27 48C21 48 17 45 15 40C14 43 13 45 13 47C4 43 0 36 0 28C0 20 4 17 7 13C10 9 10 4 9 0Z" />
            </svg>
            <HotText>热</HotText>
          </HotBadge>
        </Chip>
        <Chip $w={202}>
          <ChipLabel>神奇九转</ChipLabel>
        </Chip>
      </Strip>

      <BottomBar>
        <BuyButton>买入</BuyButton>
        <Action>
          <svg width="64" height="64" viewBox="0 0 64 64" fill="none" stroke={LIGHT} strokeWidth="5">
            <path d="M19 7.500H7.500V56.500H56.500V7.500H45" />
            <path d="M32 42V9M22 19L32 8.500L42 19" />
          </svg>
          卖出
          <Divider />
        </Action>
        <Action>
          <svg width="64" height="64" viewBox="0 0 64 64" fill="none" stroke={LIGHT} strokeWidth="5">
            <rect width="64" height="64" fill="#232527" stroke="none" />
            <path d="M7.500 6.500H56.500V49.500H39L32 57L25 49.500H7.500Z" />
            <path d="M24.500 23.500C24.500 13.500 39.500 13.500 39.500 22.500C39.500 28.500 32 28.500 32 35" strokeWidth="4.500" />
            <circle cx="32" cy="40.500" r="3" fill={LIGHT} stroke="none" />
          </svg>
          问慧答
          <Divider />
        </Action>
        <Action>
          <svg width="64" height="64" viewBox="0 0 64 64" fill={LIGHT}>
            <circle cx="32" cy="32" r="26.500" fill="none" stroke={LIGHT} strokeWidth="5" />
            <circle cx="19.500" cy="32" r="3.500" />
            <circle cx="32" cy="32" r="3.500" />
            <circle cx="44.500" cy="32" r="3.500" />
          </svg>
          更多
          <Divider />
        </Action>
      </BottomBar>
    </Screen>
  );
}
